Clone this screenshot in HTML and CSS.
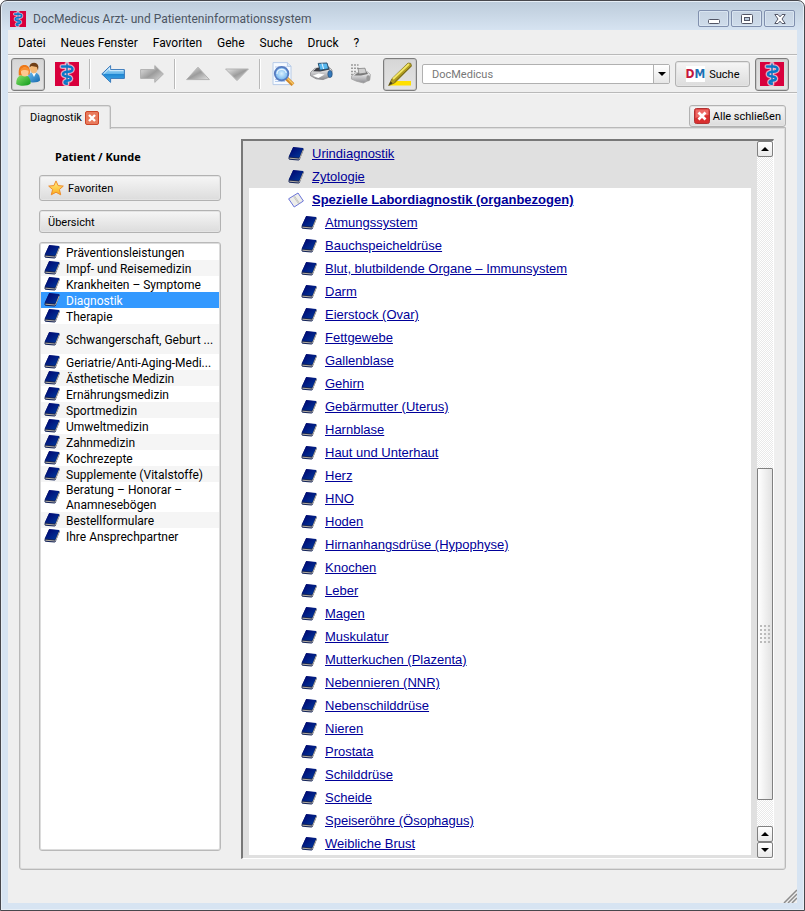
FILE: index.html
```html
<!DOCTYPE html>
<html lang="de">
<head>
<meta charset="utf-8">
<title>DocMedicus Arzt- und Patienteninformationssystem</title>
<link rel="stylesheet" href="styles.css">
</head>
<body>
<svg class="defs" aria-hidden="true">
  <defs>
    <linearGradient id="g-book" x1="0" y1="0" x2="1" y2="1"><stop offset="0" stop-color="#00006c"/><stop offset="1" stop-color="#023c9c"/></linearGradient>
    <linearGradient id="g-blue" x1="0" y1="0" x2="0" y2="1"><stop offset="0" stop-color="#d4ecfc"/><stop offset=".5" stop-color="#5fb4ea"/><stop offset=".52" stop-color="#1f86d2"/><stop offset="1" stop-color="#48b4f0"/></linearGradient>
    <linearGradient id="g-grey" x1="0" y1="0" x2="1" y2="1"><stop offset="0" stop-color="#e8e8e8"/><stop offset=".5" stop-color="#9c9c9c"/><stop offset="1" stop-color="#e4e4e4"/></linearGradient>
    <linearGradient id="g-green" x1="0" y1="0" x2="1" y2="1"><stop offset="0" stop-color="#8be36a"/><stop offset="1" stop-color="#0d9a1c"/></linearGradient>
    <linearGradient id="g-coat" x1="0" y1="0" x2="1" y2="1"><stop offset="0" stop-color="#6cc0f4"/><stop offset="1" stop-color="#1668ac"/></linearGradient>
    <linearGradient id="g-star" x1="0" y1="0" x2="0" y2="1"><stop offset="0" stop-color="#fff08a"/><stop offset="1" stop-color="#fbac18"/></linearGradient>
    <linearGradient id="g-print" x1="0" y1="0" x2="0" y2="1"><stop offset="0" stop-color="#ffffff"/><stop offset="1" stop-color="#8c8c90"/></linearGradient>
    <radialGradient id="g-lens"><stop offset="0" stop-color="#d8f0fe"/><stop offset="1" stop-color="#6fb2ee"/></radialGradient>
    <symbol id="book" viewBox="0 0 16 16">
      <path d="M5 1.4 15.4 2.2 15.6 4 11.8 13.4 10.6 14.4 1.4 13.8.4 12.6.8 10.4Z" fill="#14245a"/>
      <path d="M5.2 1 15.2 2 11.4 11.6.9 10.6Z" fill="url(#g-book)"/>
      <path d="M1.4 12.2 10.8 13 11.8 12.2 15.2 4" fill="none" stroke="#c9bfa8" stroke-width=".9"/>
    </symbol>
    <symbol id="openbook" viewBox="0 0 16 16">
      <path d="M.6 6.8 10 1 15.4 9 6.2 15Z" fill="#ededea" stroke="#6a74d8" stroke-width="1"/>
      <path d="M5.4 4.4 10.8 12M6.4 3.8 11.6 11.4" stroke="#b4b4b0" stroke-width=".7"/>
    </symbol>
    <symbol id="staff" viewBox="0 0 24 24">
      <path d="M0 0H24V24H0Z" fill="#d8003c"/>
      <path d="M12 2V22M7 4.6H13C19 4.4 19 9.6 13 9.8 6.5 10 6.5 14 12 14.4 17 14.8 17 18.2 12.5 18.6 8.6 19 8.8 21.6 11.5 21.8" fill="none" stroke="#e4809e" stroke-width="5" stroke-linecap="round"/>
      <path d="M12 2V22M7 4.6H13C19 4.4 19 9.6 13 9.8 6.5 10 6.5 14 12 14.4 17 14.8 17 18.2 12.5 18.6 8.6 19 8.8 21.6 11.5 21.8" fill="none" stroke="#f2c6d8" stroke-width="3.6" stroke-linecap="round"/>
      <path d="M12 1.5V23" stroke="#1466ae" stroke-width="1.4"/>
      <path d="M7 4.6H13C19 4.4 19 9.6 13 9.8 6.5 10 6.5 14 12 14.4 17 14.8 17 18.2 12.5 18.6 8.6 19 8.8 21.6 11.5 21.8" fill="none" stroke="#0a78c8" stroke-width="2.5" stroke-linecap="round"/>
    </symbol>
    <symbol id="people" viewBox="0 0 24 24">
      <path d="M11 20C11 13 13 10.5 17.5 10.5S24 13 24 18.5C23 20.5 17 21 11 20Z" fill="url(#g-coat)"/>
      <path d="m16 11 2 4 2-4Z" fill="#fff"/>
      <ellipse cx="17.8" cy="6.6" rx="3.8" ry="4.8" fill="#f2b877"/>
      <path d="M13.4 5.5C13-.3 22-1 22.4 4.8L22 8.5 20.8 5 15.5 4Z" fill="#704018"/>
      <path d="M.2 22C.2 16 2.5 13 7.5 13S14.6 16 14.6 21.5C12 24.4 3 24.4.2 22Z" fill="url(#g-green)"/>
      <path d="M2.8 13.5C2 4.5 5 3 8.5 3S14.8 5.5 13.6 12.5Z" fill="#ee7818"/>
      <ellipse cx="8.8" cy="10" rx="3.9" ry="4.5" fill="#fcc890"/>
      <path d="M4 9.6C4.8 4 12 4 13.4 8.4 10 8.6 8.6 6.6 4 9.6Z" fill="#f89030"/>
    </symbol>
    <symbol id="left" viewBox="0 0 24 24">
      <path d="M.8 12 9.6 3.6V7.6H23.4V16.4H9.6V20.4Z" fill="url(#g-blue)" stroke="#3878ba" stroke-width="1"/>
      <path d="M2.5 12 8.7 6V8.6H22.4" fill="none" stroke="#e3f5ff" stroke-width=".8"/>
    </symbol>
    <symbol id="right" viewBox="0 0 24 24">
      <path d="M23.4 12 14.8 3.6V7.6H.6V16.4H14.8V20.4Z" fill="url(#g-grey)" stroke="#b0b0b0" stroke-width="1"/>
    </symbol>
    <symbol id="up" viewBox="0 0 24 24"><path d="M12 5.2.6 17.6H23.4Z" fill="url(#g-grey)" stroke="#b2b2b2"/></symbol>
    <symbol id="down" viewBox="0 0 24 24"><path d="M12 18.6.6 7H23.4Z" fill="url(#g-grey)" stroke="#b2b2b2"/></symbol>
    <symbol id="preview" viewBox="0 0 24 24">
      <path d="M4 .6H16.4L20 4V22.6H2V.6Z" fill="#f6faff" stroke="#b8cce8"/>
      <path d="M16.4.6V4.4H20" fill="#dce8f6" stroke="#b8cce8"/>
      <path d="M4 5H16M4 17.5H13M4 19.5H14" stroke="#b6cdee"/>
      <path d="m15.4 16.2 6.6 6.4" stroke="#d48a28" stroke-width="4"/>
      <path d="m15.8 15.8 6.4 6.2" stroke="#f8ca68" stroke-width="1.4"/>
      <circle cx="10.6" cy="11.6" r="6.8" fill="url(#g-lens)" stroke="#587cc0" stroke-width="1.8"/>
      <path d="M6 12C6 6 15 6 15.2 11" fill="none" stroke="#fff" stroke-width="1.2" opacity=".8"/>
    </symbol>
    <symbol id="printer" viewBox="0 0 24 24">
      <path d="M.6 10.5 4.8 6.4 18.5 4.8 22 8 21.6 14.2 13 17.6 6 16.8.4 13.6Z" fill="url(#g-print)" stroke="#88888c" stroke-width=".8"/>
      <path d="M3 9.2 6.6 6 18.5 4.8 20 7.4 10 9.6Z" fill="#3c3c42"/>
      <path d="M8.2 1.4 17 1 18.6 6.8 10 8.2Z" fill="#58b8ee" stroke="#2b5070"/>
      <path d="M12 1.4 13.6 7" stroke="#e8f6ff"/>
      <path d="M2.6 13.8 8.6 11.6 14.6 12.6 8.4 16Z" fill="#fff"/>
      <ellipse cx="20" cy="12" rx="2.2" ry="3.6" fill="#3478ba" stroke="#224870" stroke-width=".6"/>
    </symbol>
    <symbol id="printlist" viewBox="0 0 24 24">
      <path d="M2 3H9.6M2 6.2H9.6M2 9.4H8M2 12.6H7" stroke="#9c9c9c" stroke-width="1.5" stroke-dasharray="2 1"/>
      <path d="M2.6 14 6 11 18.4 9.8 21.4 12.4 20.8 17.8 14.6 21 7.4 19.2 2.4 17Z" fill="url(#g-print)" stroke="#a4a4a4" stroke-width=".8"/>
      <path d="M5 13.6 8 11.2 18 10 19 12 12 13.4Z" fill="#777"/>
      <path d="M9 6.6 16 6.2 17.4 11 10 12Z" fill="#d0d0d0" stroke="#777" stroke-width=".7"/>
      <ellipse cx="19.2" cy="16.2" rx="1.8" ry="3" fill="#999"/>
    </symbol>
    <symbol id="marker" viewBox="0 0 24 24">
      <path d="M4 19H23V23.4H1Z" fill="#ffe000"/>
      <path d="M.6 23.6 3.8 16.8 20 1 22.8 1.4 23.6 4 6.6 21Z" fill="#b09c20" stroke="#77691c" stroke-width=".7"/>
      <path d="M5 17 21 2" stroke="#f2e668" stroke-width="1.8"/>
      <path d="M6.6 20 22.8 4.4" stroke="#756818" stroke-width="1"/>
      <path d="M.6 23.6 2.6 19.4 4.6 21.2Z" fill="#413b20"/>
    </symbol>
    <symbol id="star" viewBox="0 0 16 16"><path d="m8 .9 2.1 4.7 5.2.5-3.9 3.4 1.3 5.3L8 12.2 3.3 14.8 4.6 9.5.7 6.1 5.9 5.6Z" fill="url(#g-star)" stroke="#ee8c2c"/></symbol>
    <symbol id="close" viewBox="0 0 16 16">
      <rect x=".5" y=".5" width="15" height="15" rx="2" fill="#d92f2f" stroke="#b23030"/>
      <path d="M1.5 1.5H14.5V7Q8 7 1.5 10Z" fill="#ec6a66"/>
      <path d="m4.5 4.5 7 7m0-7-7 7" stroke="#fff" stroke-width="2.7"/>
    </symbol>
    <symbol id="tabclose" viewBox="0 0 14 14">
      <rect x=".5" y=".5" width="13" height="13" rx="1.5" fill="#e87a5c" stroke="#cc4528"/>
      <path d="m4 4 6 6m0-6-6 6" stroke="#fff" stroke-width="2.4"/>
    </symbol>
    <symbol id="tri-up" viewBox="0 0 8 4"><path d="M4 0 8 4H0Z"/></symbol>
    <symbol id="tri-down" viewBox="0 0 8 4"><path d="M4 4 8 0H0Z"/></symbol>
  </defs>
</svg>
<div class="window">
  <header class="titlebar">
    <svg class="i16"><use href="#staff"/></svg>
    <h1 class="title">DocMedicus Arzt- und Patienteninformationssystem</h1>
    <div class="winbtns">
      <button class="winbtn" aria-label="Minimieren"><svg class="i12" viewBox="0 0 12 12"><rect x=".5" y="6.5" width="11" height="4" rx="1" fill="#fff" stroke="#535666"/></svg></button>
      <button class="winbtn" aria-label="Maximieren"><svg class="i12" viewBox="0 0 12 12"><rect x=".5" y="1.5" width="11" height="9" rx="1" fill="#fff" stroke="#535666"/><rect x="3.5" y="4.5" width="5" height="3" fill="#b9c8da" stroke="#535666"/></svg></button>
      <button class="winbtn" aria-label="Schließen"><svg class="i12" viewBox="0 0 12 12"><path d="M.8 1.5H4L6 3.8 8 1.5H11.2L8 6 11.2 10.5H8L6 8.2 4 10.5H.8L4 6Z" fill="#fff" stroke="#535666"/></svg></button>
    </div>
  </header>
  <div class="client">
    <nav class="menu">
      <button>Datei</button><button>Neues Fenster</button><button>Favoriten</button><button>Gehe</button><button>Suche</button><button>Druck</button><button>?</button>
    </nav>
    <div class="toolbar">
      <button class="tool pressed" aria-label="Patient"><svg class="i24"><use href="#people"/></svg></button>
      <button class="tool" aria-label="Start"><svg class="i24"><use href="#staff"/></svg></button>
      <span class="sep"></span>
      <div class="group">
        <button class="tool" aria-label="Zurück"><svg class="i24"><use href="#left"/></svg></button>
        <button class="tool" aria-label="Vor"><svg class="i24"><use href="#right"/></svg></button>
      </div>
      <span class="sep"></span>
      <div class="group">
        <button class="tool" aria-label="Hoch"><svg class="i24"><use href="#up"/></svg></button>
        <button class="tool" aria-label="Runter"><svg class="i24"><use href="#down"/></svg></button>
      </div>
      <span class="sep"></span>
      <div class="group">
        <button class="tool" aria-label="Druckvorschau"><svg class="i24"><use href="#preview"/></svg></button>
        <button class="tool" aria-label="Drucken"><svg class="i24"><use href="#printer"/></svg></button>
        <button class="tool" aria-label="Liste drucken"><svg class="i24"><use href="#printlist"/></svg></button>
      </div>
      <button class="tool pressed" aria-label="Markieren"><svg class="i24"><use href="#marker"/></svg></button>
      <form class="search">
        <div class="combo">
          <input type="text" aria-label="Suchbegriff" placeholder="DocMedicus">
          <button type="button" class="drop" aria-label="Verlauf"><svg class="tri"><use href="#tri-down"/></svg></button>
        </div>
        <button type="button" class="btn go"><span class="dm"><b class="d">D</b><b class="m">M</b></span><span class="label">Suche</span></button>
      </form>
      <button class="tool pressed" aria-label="DocMedicus"><svg class="i24"><use href="#staff"/></svg></button>
    </div>
    <div class="tabs">
      <div class="tab"><span>Diagnostik</span><button aria-label="Tab schließen"><svg class="i14"><use href="#tabclose"/></svg></button></div>
      <button class="btn closeall"><svg class="i16"><use href="#close"/></svg><span class="label">Alle schließen</span></button>
    </div>
    <main class="panel">
      <aside class="side">
        <h2 class="who">Patient / Kunde</h2>
        <button class="btn fav"><svg class="i16"><use href="#star"/></svg><span class="label">Favoriten</span></button>
        <button class="btn over"><span class="label">Übersicht</span></button>
        <ul class="list">
          <li><svg class="i16"><use href="#book"/></svg><a href="#">Präventionsleistungen</a></li>
          <li><svg class="i16"><use href="#book"/></svg><a href="#">Impf- und Reisemedizin</a></li>
          <li><svg class="i16"><use href="#book"/></svg><a href="#">Krankheiten – Symptome</a></li>
          <li class="selected"><svg class="i16"><use href="#book"/></svg><a href="#">Diagnostik</a></li>
          <li><svg class="i16"><use href="#book"/></svg><a href="#">Therapie</a></li>
          <li class="tall"><svg class="i16"><use href="#book"/></svg><a href="#">Schwangerschaft, Geburt ...</a></li>
          <li><svg class="i16"><use href="#book"/></svg><a href="#">Geriatrie/Anti-Aging-Medi...</a></li>
          <li><svg class="i16"><use href="#book"/></svg><a href="#">Ästhetische Medizin</a></li>
          <li><svg class="i16"><use href="#book"/></svg><a href="#">Ernährungsmedizin</a></li>
          <li><svg class="i16"><use href="#book"/></svg><a href="#">Sportmedizin</a></li>
          <li><svg class="i16"><use href="#book"/></svg><a href="#">Umweltmedizin</a></li>
          <li><svg class="i16"><use href="#book"/></svg><a href="#">Zahnmedizin</a></li>
          <li><svg class="i16"><use href="#book"/></svg><a href="#">Kochrezepte</a></li>
          <li><svg class="i16"><use href="#book"/></svg><a href="#">Supplemente (Vitalstoffe)</a></li>
          <li class="tall"><svg class="i16"><use href="#book"/></svg><a href="#">Beratung – Honorar –<br>Anamnesebögen</a></li>
          <li><svg class="i16"><use href="#book"/></svg><a href="#">Bestellformulare</a></li>
          <li><svg class="i16"><use href="#book"/></svg><a href="#">Ihre Ansprechpartner</a></li>
        </ul>
      </aside>
      <section class="frame">
        <div class="page">
          <ul class="tree">
            <li><svg class="i16"><use href="#book"/></svg><a href="#">Urindiagnostik</a></li>
            <li><svg class="i16"><use href="#book"/></svg><a href="#">Zytologie</a></li>
          </ul>
          <div class="open">
            <h3><svg class="i16"><use href="#openbook"/></svg><a href="#">Spezielle Labordiagnostik (organbezogen)</a></h3>
            <ul class="tree sub">
              <li><svg class="i16"><use href="#book"/></svg><a href="#">Atmungssystem</a></li>
              <li><svg class="i16"><use href="#book"/></svg><a href="#">Bauchspeicheldrüse</a></li>
              <li><svg class="i16"><use href="#book"/></svg><a href="#">Blut, blutbildende Organe – Immunsystem</a></li>
              <li><svg class="i16"><use href="#book"/></svg><a href="#">Darm</a></li>
              <li><svg class="i16"><use href="#book"/></svg><a href="#">Eierstock (Ovar)</a></li>
              <li><svg class="i16"><use href="#book"/></svg><a href="#">Fettgewebe</a></li>
              <li><svg class="i16"><use href="#book"/></svg><a href="#">Gallenblase</a></li>
              <li><svg class="i16"><use href="#book"/></svg><a href="#">Gehirn</a></li>
              <li><svg class="i16"><use href="#book"/></svg><a href="#">Gebärmutter (Uterus)</a></li>
              <li><svg class="i16"><use href="#book"/></svg><a href="#">Harnblase</a></li>
              <li><svg class="i16"><use href="#book"/></svg><a href="#">Haut und Unterhaut</a></li>
              <li><svg class="i16"><use href="#book"/></svg><a href="#">Herz</a></li>
              <li><svg class="i16"><use href="#book"/></svg><a href="#">HNO</a></li>
              <li><svg class="i16"><use href="#book"/></svg><a href="#">Hoden</a></li>
              <li><svg class="i16"><use href="#book"/></svg><a href="#">Hirnanhangsdrüse (Hypophyse)</a></li>
              <li><svg class="i16"><use href="#book"/></svg><a href="#">Knochen</a></li>
              <li><svg class="i16"><use href="#book"/></svg><a href="#">Leber</a></li>
              <li><svg class="i16"><use href="#book"/></svg><a href="#">Magen</a></li>
              <li><svg class="i16"><use href="#book"/></svg><a href="#">Muskulatur</a></li>
              <li><svg class="i16"><use href="#book"/></svg><a href="#">Mutterkuchen (Plazenta)</a></li>
              <li><svg class="i16"><use href="#book"/></svg><a href="#">Nebennieren (NNR)</a></li>
              <li><svg class="i16"><use href="#book"/></svg><a href="#">Nebenschilddrüse</a></li>
              <li><svg class="i16"><use href="#book"/></svg><a href="#">Nieren</a></li>
              <li><svg class="i16"><use href="#book"/></svg><a href="#">Prostata</a></li>
              <li><svg class="i16"><use href="#book"/></svg><a href="#">Schilddrüse</a></li>
              <li><svg class="i16"><use href="#book"/></svg><a href="#">Scheide</a></li>
              <li><svg class="i16"><use href="#book"/></svg><a href="#">Speiseröhre (Ösophagus)</a></li>
              <li><svg class="i16"><use href="#book"/></svg><a href="#">Weibliche Brust</a></li>
            </ul>
          </div>
        </div>
        <div class="scroll">
          <button class="arrow" aria-label="Nach oben"><svg class="tri"><use href="#tri-up"/></svg></button>
          <div class="track">
            <div class="before"></div>
            <div class="thumb"><span class="grip"></span></div>
            <div class="after"></div>
          </div>
          <button class="arrow" aria-label="Eine Zeile nach oben"><svg class="tri"><use href="#tri-up"/></svg></button>
          <button class="arrow" aria-label="Nach unten"><svg class="tri"><use href="#tri-down"/></svg></button>
        </div>
      </section>
    </main>
    <footer class="status"><svg class="i14" viewBox="0 0 14 14"><path d="M1 14 14 1M5 14 14 5M9 14 14 9" stroke="#8c8c8c" stroke-width="1.5"/></svg></footer>
  </div>
</div>
</body>
</html>
```
FILE: styles.css
```css
* { box-sizing: border-box; }
body { margin: 0; background: #fff; color: #000; font: 12px/16px Roboto, "Noto Sans", sans-serif; }
button, input { font: inherit; color: inherit; }
button { margin: 0; padding: 0; border: 0; background: none; }
ul, h1, h2, h3 { margin: 0; padding: 0; list-style: none; }
svg { display: block; flex: none; }
.defs { position: absolute; width: 0; height: 0; }
.i12 { width: 12px; height: 12px; }
.i14 { width: 14px; height: 14px; }
.i16 { width: 16px; height: 16px; }
.i24 { width: 24px; height: 24px; }
.tri { width: 8px; height: 4px; }

.window { display: flex; flex-direction: column; min-height: 100vh; padding: 0 7px 7px; border: 1px solid #47474c; border-radius: 7px 7px 0 0; background: linear-gradient(#bccbda, #d7e4f2 30px); box-shadow: inset 0 0 0 1px #e6eef6; }
.titlebar { display: flex; align-items: center; height: 29px; padding: 6px 2px 0 2px; gap: 7px; }
.title { flex: 1; font-size: 12px; font-weight: 400; color: #4c5562; }
.winbtns { display: flex; gap: 2px; }
.winbtn { display: flex; align-items: center; justify-content: center; width: 31px; height: 17px; border: 1px solid #8190ae; border-radius: 2px; background: linear-gradient(#c6d3e2, #cfdcea); box-shadow: inset 0 0 0 1px #d9e5f1; }

.client { display: flex; flex: 1; flex-direction: column; background: #efefef; }
.menu { display: flex; align-items: center; gap: 15px; height: 25px; padding: 1px 10px 0; border-bottom: 1px solid #b9b9b9; }
.toolbar { display: flex; align-items: center; gap: 3px; height: 38px; padding: 1px 8px 0 3px; border-bottom: 1px solid #b9b9b9; box-shadow: inset 0 1px #f8f8f8, 0 1px #f8f8f8; }
.group { display: flex; gap: 1px; }
.tool { display: flex; flex: none; align-items: center; justify-content: center; width: 38px; height: 33px; }
.pressed { width: 34px; border: 1px solid #7d7d7d; border-radius: 3px; background: linear-gradient(#d6d6d6, #e4e4e4); box-shadow: inset 0 0 0 1px #c8c8c8; }
.sep { width: 2px; height: 30px; border-left: 1px solid #b9b9b9; border-right: 1px solid #fff; }
.search { display: flex; flex: 1; align-items: center; gap: 5px; margin: 0 2px; min-width: 0; font-size: 11px; }
.combo { display: flex; flex: 1; min-width: 0; height: 20px; border: 1px solid #b0b0b0; border-radius: 2px; background: #fff; }
.combo input { flex: 1; min-width: 0; padding: 1px 9px 0; border: 0; background: none; }
.combo input::placeholder { color: #777; opacity: 1; }
.drop { display: flex; align-items: center; justify-content: center; width: 16px; border-left: 1px solid #b0b0b0; background: linear-gradient(#fff, #e6e6e6); }

.btn { display: flex; align-items: center; border: 1px solid #b2b2b2; border-radius: 3px; background: linear-gradient(#f6f6f6, #dcdcdc); box-shadow: inset 0 0 0 1px #e4e4e4; font-size: 11px; white-space: nowrap; }
.label, .list a { padding-top: 2px; }
.go { gap: 4px; justify-content: center; width: 75px; height: 26px; }
.dm { display: block; background: #fff; font: 700 12px/16px "Liberation Sans Narrow", "DejaVu Sans Condensed", sans-serif; }
.d { color: #c4163c; }
.m { color: #1c70b4; }

.tabs { display: flex; justify-content: space-between; align-items: flex-start; margin: 12px 11px 0; font-size: 11px; }
.tab { display: flex; position: relative; align-items: center; gap: 3px; height: 24px; padding: 0 11px 0 10px; border: 1px solid #b9b9b9; border-bottom: 0; border-radius: 3px 3px 0 0; background: #efefef; box-shadow: inset 1px 1px #dcdcdc, inset -1px 0 #dcdcdc; }
.closeall { gap: 3px; height: 22px; padding: 0 4px; }
.panel { display: flex; flex: 1; gap: 20px; margin: -2px 11px 0; padding: 11px 11px 10px 19px; border: 1px solid #b9b9b9; border-radius: 0 0 3px 3px; box-shadow: inset 0 0 0 1px #dcdcdc; }

.side { display: flex; flex: none; flex-direction: column; gap: 9px; width: 182px; padding: 9px 0 8px; }
.who { padding-left: 16px; font: 700 11px/18px "Open Sans", sans-serif; }
.fav { gap: 4px; height: 26px; padding: 0 8px; }
.over { height: 23px; padding: 0 8px; }
.list { flex: 1; padding: 1px; border: 1px solid #b9b9b9; border-radius: 3px; background: #fff; box-shadow: inset 0 0 0 1px #dcdcdc; }
.list li { display: flex; align-items: center; gap: 6px; height: 16px; padding-left: 3px; white-space: nowrap; }
.list li:nth-child(even) { background: #f5f5f5; }
.list li.tall { height: 30px; line-height: 15px; }
.list li.selected { background: #3399ff; color: #fff; }
.list a { color: inherit; text-decoration: none; }

.frame { display: flex; flex: 1; min-width: 0; border: 2px solid #787878; border-right: 1px solid #fff; border-bottom: 1px solid #fff; background: #e0e0e0; }
.page { flex: 1; min-width: 0; padding: 1px 6px 3px; font: 13px/23px "Liberation Sans", sans-serif; }
.page a { color: #000099; }
.tree li, .open h3 { display: flex; align-items: center; gap: 8px; height: 23px; padding-left: 39px; }
.open { background: #fff; }
.open h3 { font-size: 13px; }
.sub li { padding-left: 52px; }

.scroll { display: flex; flex-direction: column; width: 16px; }
.arrow { display: flex; flex: none; align-items: center; justify-content: center; height: 16px; border: 1px solid #808080; border-radius: 2px; background: linear-gradient(#fff, #e9e9e9); }
.track { display: flex; flex: 1; flex-direction: column; background: repeating-conic-gradient(#e9e9e9 0 25%, #fff 0 50%) 0 0 / 2px 2px; }
.before { flex: 312; }
.thumb { display: flex; flex: 331; align-items: center; justify-content: center; border: 1px solid #808080; border-radius: 1px; background: linear-gradient(90deg, #fff, #e2e2e2); }
.after { flex: 26; }
.grip { width: 11px; height: 18px; background: radial-gradient(circle at 1px 1px, #bbb 1px, transparent 1px) 0 0 / 4px 4px; }
.status { display: flex; align-items: flex-end; justify-content: flex-end; height: 33px; }
```
